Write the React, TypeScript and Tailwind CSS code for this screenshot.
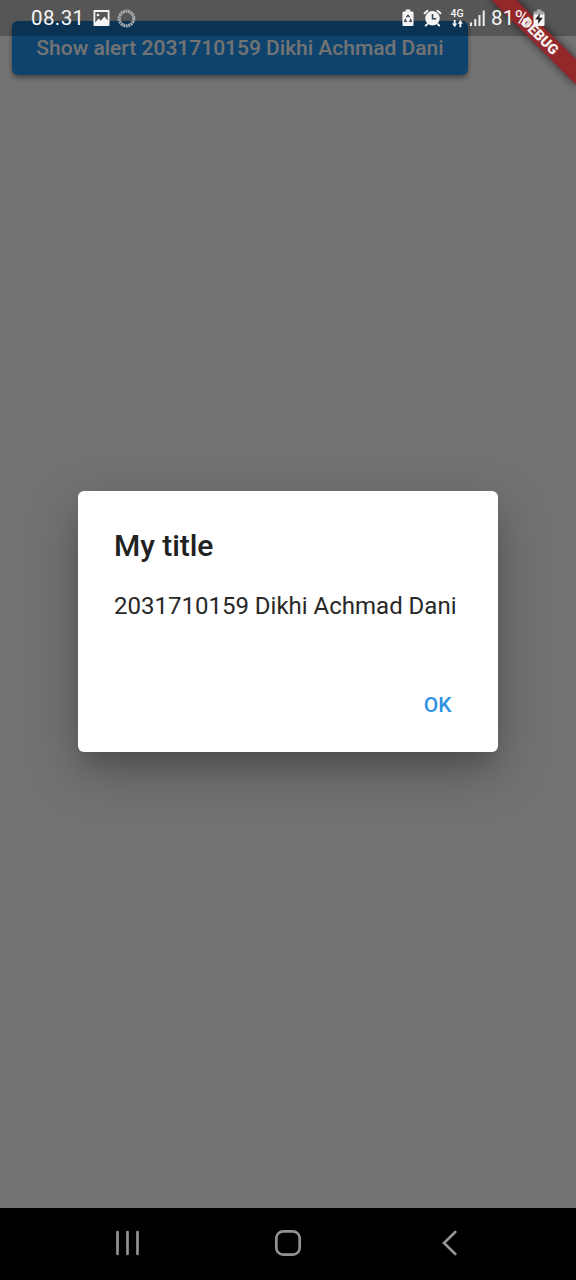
import React from "react";

function BatteryRecycle() {
  return (
    <svg className="block h-[18px] w-[12px]" viewBox="0 0 13 18" preserveAspectRatio="none">
      <path fill="#f4f4f4" d="M4 .5h5v2h2.3Q12.5 2.5 12.5 3.7v12.1Q12.5 17 11.3 17H1.7Q.5 17 .5 15.8V3.700Q.5 2.500 1.700 2.500H4z" />
      <path fill="none" stroke="#3c444c" strokeWidth="1.400" d="M4.700 8.200 6.500 6.200 8.300 8.200M9.200 9.700l.8 2.600H7.700M5.300 12.300H3l.8-2.600" />
    </svg>
  );
}

function Alarm() {
  return (
    <svg className="block h-[18px] w-[19px]" viewBox="0 0 19 18">
      <g fill="none" stroke="#f4f4f4" strokeWidth="2" strokeLinecap="round">
        <path d="M1.600 4.300 4.500 1.800M17.400 4.300 14.500 1.800M4.200 15.200 2.800 16.500M14.800 15.200l1.400 1.300" />
      </g>
      <circle cx="9.500" cy="9.300" r="7.200" fill="#f4f4f4" />
      <path d="M9.500 5v4.800h3.700" fill="none" stroke="#34424f" strokeWidth="1.500" />
    </svg>
  );
}

function DataArrows() {
  return (
    <svg className="block h-[8px] w-[13px]" viewBox="0 0 12 8">
      <path fill="#f4f4f4" d="M2.200 0h1.900v3.500h1.700L3.150 7.200 .5 3.500h1.700zM7.900 7.200h1.900V3.700h1.700L8.850 0 6.200 3.700h1.700z" />
    </svg>
  );
}

function Signal() {
  return (
    <svg className="block h-[17px] w-[15px]" viewBox="0 0 15 17">
      <path fill="#ededed" d="M0 12.500h2V16H0zM4.300 9h2v7h-2zM8.500 5h2v11h-2zM12.700.5h2V16h-2z" />
    </svg>
  );
}

function BatteryCharging() {
  return (
    <svg className="block h-[18px] w-[12px]" viewBox="0 0 13 18" preserveAspectRatio="none">
      <path fill="#a9a9a9" d="M4 .5h5v2h2.300Q12.500 2.500 12.500 3.700V6H.5V3.700Q.5 2.500 1.700 2.500H4z" />
      <path fill="#f4f4f4" d="M.5 5.500h12v10.300q0 1.200-1.200 1.200H1.700Q.5 17 .5 15.800z" />
      <path fill="#222" d="M7.500 4.300 2.300 10.600h3.500l-.5 4.500 5.400-6.400H7z" />
    </svg>
  );
}

function StatusBar() {
  return (
    <div className="absolute inset-x-0 top-0 z-20 flex h-9 items-center pl-[31px] pr-[31px] text-[#f6f6f6]">
      <span className="w-[62px] text-[20.500px] leading-[37px] tracking-[0.4px]">08.31</span>
      <svg className="block h-[16px] w-[17px]" viewBox="0 0 17 16">
        <path fillRule="evenodd" fill="#f4f4f4" d="M1.500 0h14q1 0 1 1v14q0 1-1 1h-14q-1 0-1-1V1q0-1 1-1zM2.300 2v10.200l3.400-3.700 2.200 2.300 3.500-4.300 3.300 4V2z" />
        <circle cx="5" cy="5" r="1.300" fill="#f4f4f4" />
      </svg>
      <svg className="ml-[7px] block size-[19px]" viewBox="0 0 19 19">
        <circle cx="9.500" cy="9.500" r="7.300" fill="none" stroke="#a9adb0" strokeWidth="3.200" strokeDasharray="1.950 .599" />
      </svg>
      <div className="ml-auto flex items-center">
        <BatteryRecycle />
        <div className="ml-[9px]"><Alarm /></div>
        <div className="ml-[8px] flex w-[14px] flex-col items-center gap-px">
          <span className="text-[10.500px] font-medium leading-[10px]">4G</span>
          <DataArrows />
        </div>
        <div className="ml-[6px]"><Signal /></div>
        <span className="ml-[6px] w-[42px] whitespace-nowrap text-[20.500px] leading-[38px] tracking-[0.300px]">81%</span>
        <BatteryCharging />
      </div>
    </div>
  );
}

function AlertDialog() {
  return (
    <div className="absolute inset-0 z-10 flex items-center justify-center bg-black/[0.549] pt-[35px]">
      <div className="flex h-[261px] w-[420px] flex-col rounded-[6px] bg-white px-9 pt-9 shadow-[0_18px_22px_-8px_rgba(0,0,0,0.15),0_18px_52px_2px_rgba(0,0,0,0.25)]">
        <h1 className="text-[30px] font-medium leading-[37px] tracking-[-0.050px] text-[#212121]">My title</h1>
        <p className="mt-[24px] whitespace-nowrap text-[24px] leading-[36px] text-[#282828]">2031710159 Dikhi Achmad Dani</p>
        <button className="mr-[10.500px] mt-[68px] self-end text-[21px] font-medium leading-[26px] text-[#2f92e4]">OK</button>
      </div>
    </div>
  );
}

function DebugBanner() {
  return (
    <div className="absolute left-[480px] top-[26.500px] z-10 flex h-[18px] w-[120px] rotate-45 items-center justify-center bg-[#93282b] text-[14.300px] font-black leading-[18px] text-[#f4eeee] shadow-[0_0_10px_rgba(0,0,0,0.6)]">
      DEBUG
    </div>
  );
}

function NavigationBar() {
  return (
    <nav className="flex h-[72px] items-center justify-between bg-black pb-[2px] pl-[114px] pr-[117px]">
      <svg className="block size-[28px]" viewBox="0 0 28 28">
        <path d="M3.500 3v22M13.500 3v22M23.500 3v22" stroke="#929292" strokeWidth="2.700" strokeLinecap="round" />
      </svg>
      <svg className="mr-[7px] block size-[28px]" viewBox="0 0 28 28">
        <rect x="2.300" y="2.300" width="23.400" height="23.400" rx="7" fill="none" stroke="#929292" strokeWidth="2.700" />
      </svg>
      <svg className="block h-[28px] w-[18px]" viewBox="0 0 18 28">
        <path d="M14.300 3 3 14l11.300 11" fill="none" stroke="#929292" strokeWidth="2.700" strokeLinecap="round" />
      </svg>
    </nav>
  );
}

export default function App() {
  return (
    <div className="relative flex h-[1280px] w-[576px] flex-col overflow-hidden bg-black font-[Roboto,sans-serif]">
      <main className="relative flex-1 overflow-hidden bg-white px-3 pt-[21px]">
        <button className="flex h-[54px] w-[456px] items-center justify-center whitespace-nowrap rounded-[6px] bg-[#2196f3] pt-[2px] text-[21px] font-medium text-white shadow-[0_3px_5px_rgba(0,0,0,0.4)]">
          Show alert 2031710159 Dikhi Achmad Dani
        </button>
        <AlertDialog />
        <div className="absolute inset-x-0 top-0 z-10 h-9 bg-black/25" />
        <DebugBanner />
        <StatusBar />
      </main>
      <NavigationBar />
    </div>
  );
}
